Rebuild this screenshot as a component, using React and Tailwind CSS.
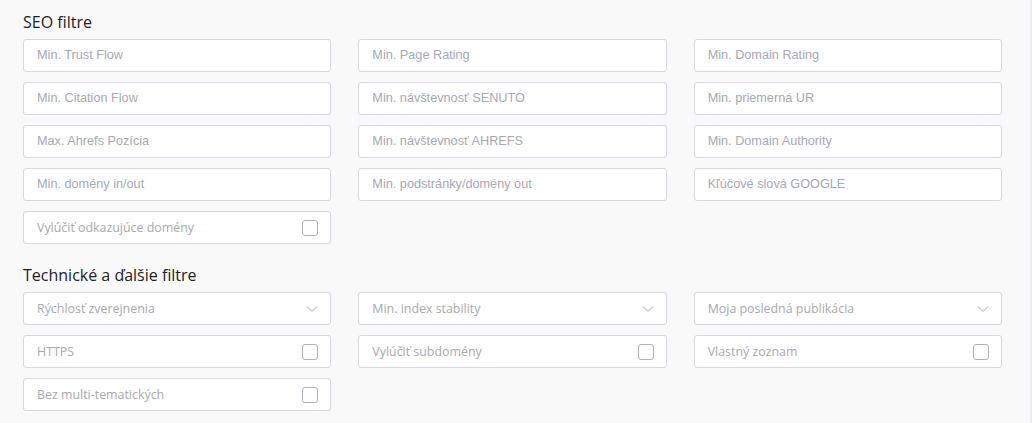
import { useState } from 'react';

const seoFields = [
  'Min. Trust Flow', 'Min. Page Rating', 'Min. Domain Rating',
  'Min. Citation Flow', 'Min. návštevnosť SENUTO', 'Min. priemerná UR',
  'Max. Ahrefs Pozícia', 'Min. návštevnosť AHREFS', 'Min. Domain Authority',
  'Min. domény in/out', 'Min. podstránky/domény out', 'Kľúčové slová GOOGLE',
];

const open = { fontFamily: '"Open Sans", "Noto Sans", sans-serif' };
const arial = { fontFamily: '"Liberation Sans", Arial, sans-serif' };

function TextField({ label }) {
  return (
    <input
      type="text"
      placeholder={label}
      style={arial}
      className="h-[33px] w-full rounded-[3px] border border-[#d6d7e3] bg-white px-[13px] pb-[2px] text-[12.7px] text-[#555] outline-none placeholder:text-[#a6a8b6]"
    />
  );
}

function CheckField({ label }) {
  const [on, setOn] = useState(false);
  return (
    <label
      style={open}
      className="flex h-[33px] w-full cursor-pointer items-center justify-between rounded-[3px] border border-[#d6d7e3] bg-white pl-[13px] pr-[12px] text-[12.4px] text-[#a6a8b6]"
    >
      <span className="pt-[2px]">{label}</span>
      <span
        onClick={() => setOn(!on)}
        className={on ? 'h-4 w-4 rounded-[3px] border border-[#6b6f8a] bg-[#6b6f8a]' : 'h-4 w-4 rounded-[3px] border border-[#aeb0bf] bg-white'}
      />
    </label>
  );
}

function SelectField({ label }) {
  return (
    <div
      style={open}
      className="flex h-[33px] w-full items-center justify-between rounded-[3px] border border-[#d6d7e3] bg-white pl-[13px] pr-[12px] text-[12.4px] text-[#a6a8b6]"
    >
      <span className="pt-[2px]">{label}</span>
      <svg width="12" height="8" viewBox="0 0 12 8" fill="none">
        <path d="M1 1.5l5 5 5-5" stroke="#a3a6bb" strokeWidth="1" />
      </svg>
    </div>
  );
}

function Heading({ children }) {
  return (
    <h2 style={open} className="mb-[5px] text-[16px] leading-6 text-[#1d2125]">
      {children}
    </h2>
  );
}

export default function App() {
  return (
    <div className="flex h-[423px] w-[1032px] bg-[#f9f9f9]">
      <div className="w-[1030px] pl-[23px] pr-[28px] pt-[10px]">
        <Heading>SEO filtre</Heading>
        <div className="grid grid-cols-3 gap-x-[27px] gap-y-[10px]">
          {seoFields.map((f) => (
            <TextField key={f} label={f} />
          ))}
          <CheckField label="Vylúčiť odkazujúce domény" />
        </div>

        <div className="mt-[19px]">
          <Heading>Technické a ďalšie filtre</Heading>
          <div className="grid grid-cols-3 gap-x-[27px] gap-y-[10px]">
            <SelectField label="Rýchlosť zverejnenia" />
            <SelectField label="Min. index stability" />
            <SelectField label="Moja posledná publikácia" />
            <CheckField label="HTTPS" />
            <CheckField label="Vylúčiť subdomény" />
            <CheckField label="Vlastný zoznam" />
            <CheckField label="Bez multi-tematických" />
          </div>
        </div>
      </div>
      <div className="w-[2px] bg-[#ebebef]" />
    </div>
  );
}
